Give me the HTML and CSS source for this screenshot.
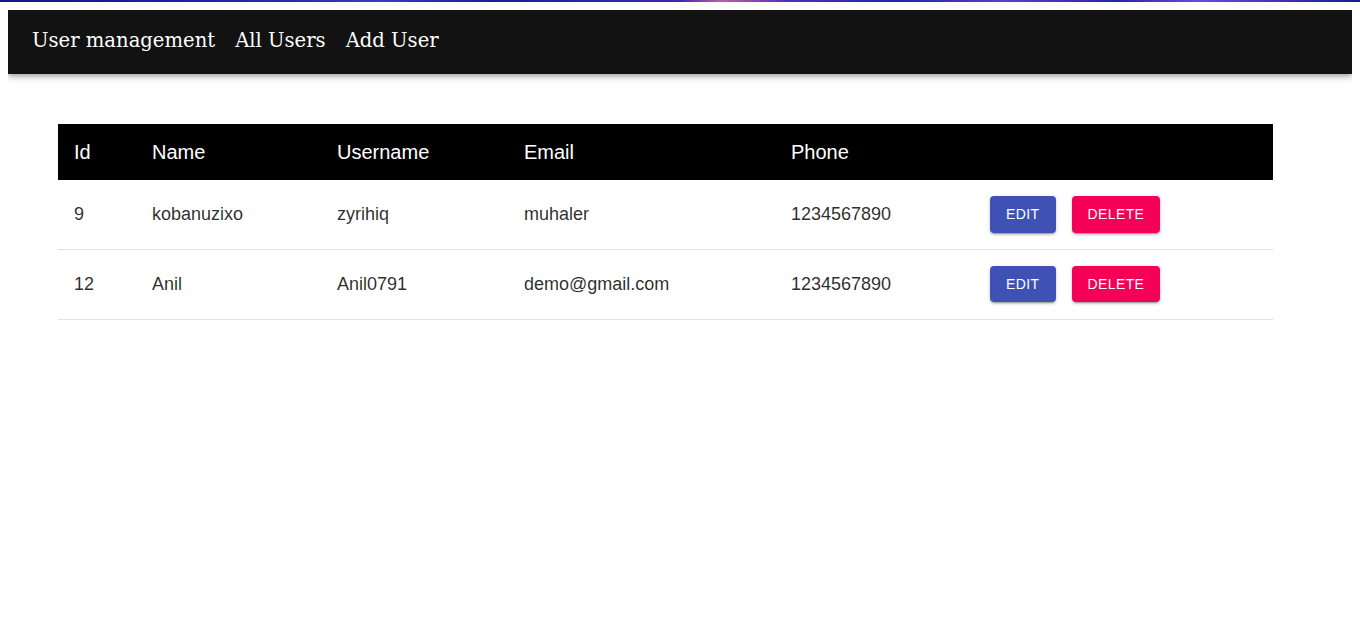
FILE: index.html
```html
<!DOCTYPE html>
<html lang="en">
<head>
<meta charset="utf-8">
<title>User management</title>
<link rel="stylesheet" href="styles.css">
</head>
<body>
<header class="appbar">
  <nav class="toolbar">
    <a class="nav-link" href="#">User management</a>
    <a class="nav-link" href="#">All Users</a>
    <a class="nav-link" href="#">Add User</a>
  </nav>
</header>
<table class="users">
  <colgroup>
    <col class="c-id"><col class="c-name"><col class="c-user"><col class="c-email"><col class="c-phone"><col class="c-act">
  </colgroup>
  <thead>
    <tr class="head-row">
      <th>Id</th><th>Name</th><th>Username</th><th>Email</th><th>Phone</th><th></th>
    </tr>
  </thead>
  <tbody>
    <tr>
      <td>9</td><td>kobanuzixo</td><td>zyrihiq</td><td>muhaler</td><td>1234567890</td>
      <td><div class="actions"><button class="btn btn-edit">Edit</button><button class="btn btn-delete">Delete</button></div></td>
    </tr>
    <tr>
      <td>12</td><td>Anil</td><td>Anil0791</td><td>demo@gmail.com</td><td>1234567890</td>
      <td><div class="actions"><button class="btn btn-edit">Edit</button><button class="btn btn-delete">Delete</button></div></td>
    </tr>
  </tbody>
</table>
</body>
</html>
```
FILE: styles.css
```css
html {
  border-top: 2px solid transparent;
  border-image: linear-gradient(90deg, #14148a 0%, #1e1ea0 12%, #2a2ab4 22%, #3b3cc0 28%, #1c1c98 36%, #3a2ab0 50%, #c25aa8 53%, #4b2fc0 58%, #2424a8 66%, #5a3ed0 74%, #2a20b0 82%, #6a4ad8 88%, #1a1a90 100%) 1;
}
body {
  margin: 8px;
  background: #fff;
  font-family: "Liberation Sans", Arial, sans-serif;
}
.appbar {
  background: #121212;
  height: 64px;
  box-shadow: 0 2px 4px -1px rgba(0,0,0,0.2), 0 4px 5px 0 rgba(0,0,0,0.14), 0 1px 10px 0 rgba(0,0,0,0.12);
}
.toolbar {
  display: flex;
  align-items: center;
  height: 64px;
  padding: 0 24px;
  gap: 20px;
}
.nav-link {
  color: #fff;
  text-decoration: none;
  font-family: "DejaVu Serif", "Liberation Serif", serif;
  font-size: 19.6px;
  margin-top: -3px;
}
.users {
  margin: 50px 0 0 50px;
  width: 1215px;
  border-collapse: collapse;
  table-layout: fixed;
}
.c-id { width: 78px; }
.c-name { width: 185px; }
.c-user { width: 187px; }
.c-email { width: 267px; }
.c-phone { width: 199px; }
.c-act { width: 299px; }
.head-row {
  background: #000;
}
.users th {
  color: #fff;
  font-size: 20px;
  font-weight: normal;
  text-align: left;
  padding: 16px;
  line-height: 24px;
}
.users td {
  color: rgba(0,0,0,0.84);
  font-size: 18px;
  padding: 16px;
  border-bottom: 1px solid #e0e0e0;
  height: 36.75px;
  vertical-align: middle;
}
.actions {
  display: flex;
  gap: 16px;
}
.btn {
  border: 0;
  border-radius: 4px;
  color: #fff;
  font-family: "Liberation Sans", Arial, sans-serif;
  font-size: 14px;
  text-transform: uppercase;
  letter-spacing: 0.02857em;
  padding: 6px 16px;
  line-height: 24.5px;
  box-shadow: 0 3px 1px -2px rgba(0,0,0,0.2), 0 2px 2px 0 rgba(0,0,0,0.14), 0 1px 5px 0 rgba(0,0,0,0.12);
  cursor: pointer;
}
.btn-edit { background: #3f51b5; }
.btn-delete { background: #f50057; }
```
